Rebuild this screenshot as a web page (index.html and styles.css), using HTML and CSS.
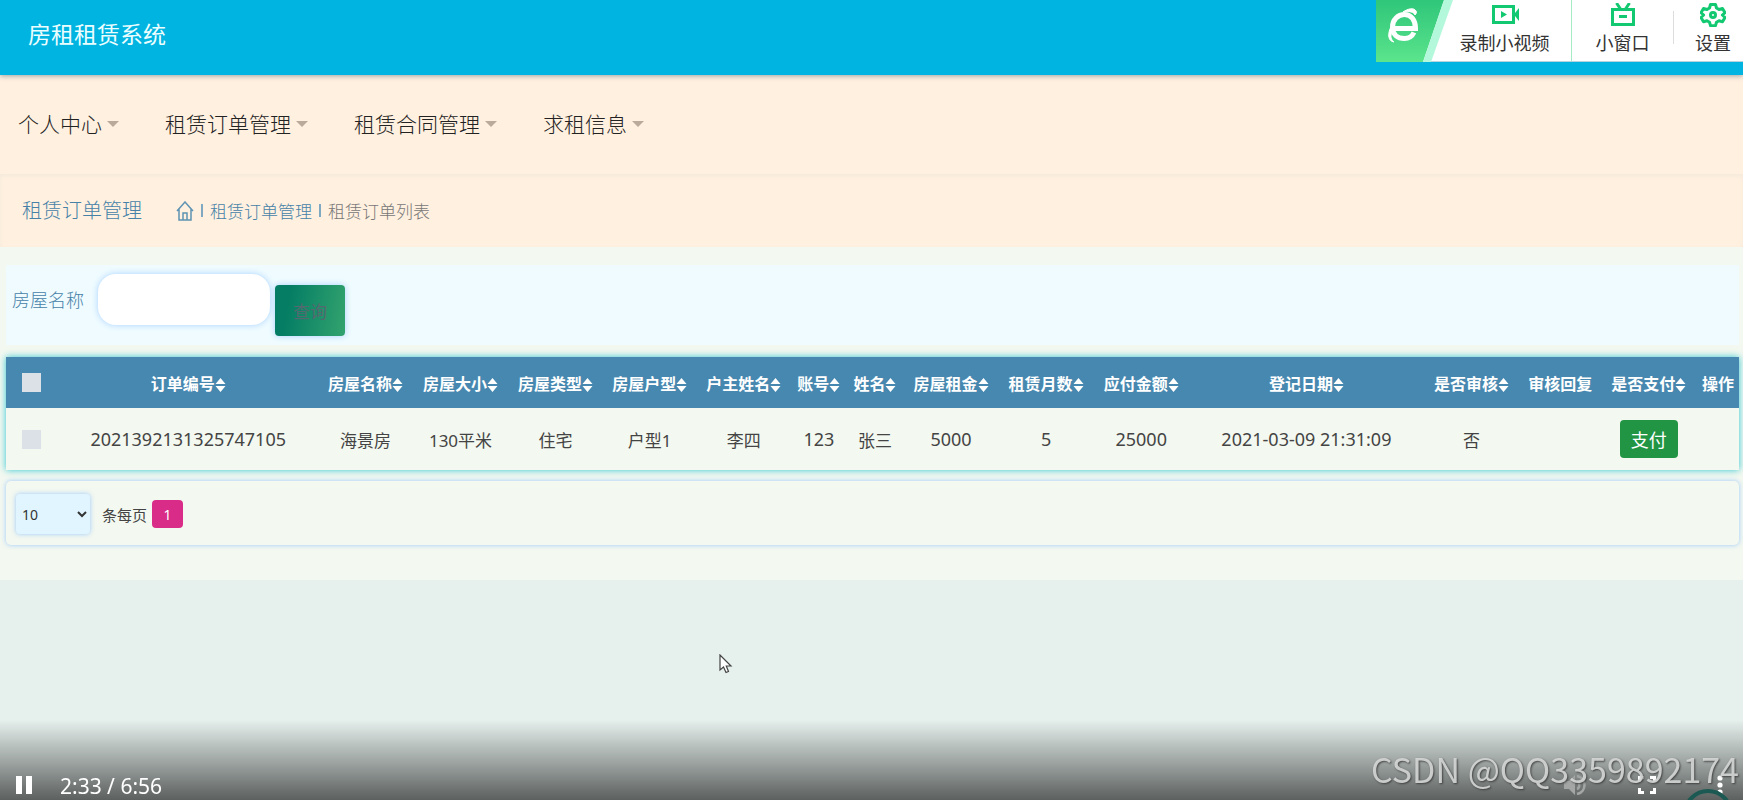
FILE: index.html
```html
<!DOCTYPE html>
<html lang="zh-CN">
<head>
<meta charset="utf-8">
<title>房租租赁系统</title>
<link rel="stylesheet" href="styles.css">
</head>
<body>
<svg class="sprite" aria-hidden="true">
  <symbol id="sort" viewBox="0 0 10 16"><path d="M5 1 10 7H0zM5 15 0 9h10z" fill="currentColor"/></symbol>
</svg>
<header class="header">
  <h1 class="brand">房租租赁系统</h1>
  <div class="recorder">
    <div class="recorder-logo">
      <svg width="82" height="62" viewBox="0 0 82 62">
        <defs><linearGradient id="g" x1="0" y1="0" x2="0" y2="1"><stop offset="0" stop-color="#2fc67a"/><stop offset="1" stop-color="#5be48c"/></linearGradient></defs>
        <path d="M0 0H68L47 62H0z" fill="url(#g)"/>
        <path d="M68 0H77L55 62H47z" fill="#b4f8dc"/>
        <path d="M17 28.500H39.500C39.500 20 35 14.500 28.500 14.500S16.500 19.500 16.500 27 21.500 38.500 28.500 38.500C33 38.500 36 36.500 38 32.500" fill="none" stroke="#fff" stroke-width="5"/>
        <path d="M27 12C31 9 38 7 40 11c1 1 0 3-1 4-1-3-5-4-12-3zM15 27c-3 5-4 14 3 15-3-2-4-6-2-10z" fill="#fff" stroke="#fff"/>
      </svg>
    </div>
    <button class="tool tool-video" type="button">
      <svg width="28" height="24" viewBox="0 0 28 24" fill="none" stroke="#12c870" stroke-width="3"><path d="M2.500 3.500h20v16h-20z"/><path d="M10 8v7l6-3.500z" fill="#12c870" stroke="none"/><path d="M24 10l4-5v13l-4-5z" fill="#12c870" stroke="none"/></svg>
      <span>录制小视频</span>
    </button>
    <button class="tool tool-window" type="button">
      <svg width="28" height="24" viewBox="0 0 28 24" fill="none" stroke="#12c870" stroke-width="3"><path d="M3.500 6.500h21v15h-21zM10 13.500h8M7.500 0l4 6M20.500 0l-4 6"/></svg>
      <span>小窗口</span>
    </button>
    <button class="tool tool-settings" type="button">
      <svg width="26" height="24" viewBox="0 0 26 24" fill="none" stroke="#12c870" stroke-width="3" stroke-linejoin="round"><path d="M10.500 1.500h5l1 3.500 2.500 1.500 3.500-1 2.500 4.200-2.600 2.300 2.600 2.500-2.500 4.200-3.500-1-2.500 1.500-1 3.500h-5l-1-3.500L7 17.700l-3.500 1L1 14.500 3.600 12 1 9.700 3.500 5.500l3.500 1L9.500 5z"/><circle cx="13" cy="12" r="2.500"/></svg>
      <span>设置</span>
    </button>
  </div>
</header>
<nav class="menu">
  <a href="#">个人中心</a>
  <a href="#">租赁订单管理</a>
  <a href="#">租赁合同管理</a>
  <a href="#">求租信息</a>
</nav>
<div class="crumbs">
  <h2>租赁订单管理</h2>
  <div class="trail">
    <a href="#" aria-label="首页"><svg width="18" height="20" viewBox="0 0 18 20" fill="none" stroke="#5f93b3" stroke-width="1.500"><path d="M1 10 9 1l8 9M3 8v11h12V8M7 19v-7h4v7"/></svg></a>
    <i></i><a href="#">租赁订单管理</a><i></i><span>租赁订单列表</span>
  </div>
</div>
<main class="main">
  <form class="search">
    <label for="house">房屋名称</label>
    <input id="house" type="text">
    <button type="button">查询</button>
  </form>
  <table class="orders">
    <colgroup><col class="w-check"><col class="w-id"><col class="w-m"><col class="w-l"><col class="w-m"><col class="w-m"><col class="w-m"><col class="w-s"><col class="w-s"><col class="w-l"><col class="w-m"><col class="w-l"><col class="w-date"><col class="w-l"><col class="w-reply"><col class="w-l"><col class="w-act"></colgroup>
    <thead><tr>
      <th class="check"><input type="checkbox" aria-label="全选"></th>
      <th>订单编号<svg><use href="#sort"/></svg></th>
      <th>房屋名称<svg><use href="#sort"/></svg></th>
      <th>房屋大小<svg><use href="#sort"/></svg></th>
      <th>房屋类型<svg><use href="#sort"/></svg></th>
      <th>房屋户型<svg><use href="#sort"/></svg></th>
      <th>户主姓名<svg><use href="#sort"/></svg></th>
      <th>账号<svg><use href="#sort"/></svg></th>
      <th>姓名<svg><use href="#sort"/></svg></th>
      <th>房屋租金<svg><use href="#sort"/></svg></th>
      <th>租赁月数<svg><use href="#sort"/></svg></th>
      <th>应付金额<svg><use href="#sort"/></svg></th>
      <th>登记日期<svg><use href="#sort"/></svg></th>
      <th>是否审核<svg><use href="#sort"/></svg></th>
      <th>审核回复</th>
      <th>是否支付<svg><use href="#sort"/></svg></th>
      <th>操作</th>
    </tr></thead>
    <tbody><tr>
      <td class="check"><input type="checkbox" aria-label="选择订单"></td>
      <td class="num">2021392131325747105</td>
      <td>海景房</td>
      <td>130平米</td>
      <td>住宅</td>
      <td>户型1</td>
      <td>李四</td>
      <td class="num">123</td>
      <td>张三</td>
      <td class="num">5000</td>
      <td class="num">5</td>
      <td class="num">25000</td>
      <td class="num">2021-03-09 21:31:09</td>
      <td>否</td>
      <td></td>
      <td><button class="pay" type="button">支付</button></td>
      <td></td>
    </tr></tbody>
  </table>
  <div class="pager">
    <select id="size"><option>10</option><option>20</option></select>
    <label for="size">条每页</label>
    <button type="button">1</button>
  </div>
</main>
<svg class="cursor" width="14" height="20" viewBox="0 0 14 20"><path d="M1 1v15l3.500-3 2.500 5.500 2.500-1L7.300 12H12z" fill="#fff" stroke="#444" stroke-width="1.200"/></svg>
<div class="player">
  <button type="button" aria-label="暂停"><svg width="16" height="18" viewBox="0 0 16 18" fill="#fff"><path d="M0 0h6v18H0zM10 0h6v18h-6z"/></svg></button>
  <span class="time">2:33 / 6:56</span>
  <svg class="ring" width="50" height="11" viewBox="0 0 50 11" fill="none" stroke="#1c5953" stroke-width="4"><circle cx="25" cy="25" r="23"/></svg>
  <div class="player-tools">
    <button type="button" aria-label="音量"><svg width="22" height="20" viewBox="0 0 22 20"><path d="M0 6h5l6-6v20l-6-6H0z" fill="#a3a6a5"/><path d="M13 6c3 1 3 7 0 8M13 1c10 2 10 16 0 18" fill="none" stroke="#a3a6a5" stroke-width="2.500"/></svg></button>
    <button type="button" aria-label="全屏"><svg width="18" height="18" viewBox="0 0 18 18" fill="none" stroke="#fff" stroke-width="3"><path d="M1.500 6V1.500H6M12 1.500h4.500V6M16.500 12v4.500H12M6 16.500H1.500V12"/></svg></button>
    <button type="button" aria-label="更多"><svg width="6" height="20" viewBox="0 0 6 20" fill="#fff"><circle cx="3" cy="3" r="2.600"/><circle cx="3" cy="10" r="2.600"/><circle cx="3" cy="17" r="2.600"/></svg></button>
  </div>
</div>
<div class="watermark">CSDN @QQ3359892174</div>
</body>
</html>
```
FILE: styles.css
```css
* { box-sizing: border-box; }
body {
  margin: 0;
  min-height: 100vh;
  position: relative;
  overflow: hidden;
  background: #e6f0ed;
  color: #444;
  font-family: "Noto Sans", "Noto Sans CJK SC", sans-serif;
  font-size: 17px;
}
h1, h2 { margin: 0; font-weight: 400; }
a { color: inherit; text-decoration: none; }
button { border: 0; padding: 0; background: none; font-family: inherit; color: inherit; }
svg { display: block; }
.sprite { display: none; }

.header {
  position: relative;
  display: flex;
  justify-content: space-between;
  align-items: flex-start;
  height: 75px;
  background: #00b4e2;
  box-shadow: 0 1px 5px rgba(60, 90, 110, .5);
}
.brand { padding: 17px 28px; font-size: 23px; line-height: 34px; color: #ecffff; }
.recorder { display: flex; height: 62px; background: #fff; border-bottom: 1px solid #b9d3de; }
.recorder-logo { width: 82px; }
.tool {
  position: relative;
  display: flex;
  flex-direction: column;
  align-items: center;
  gap: 3px;
  padding-top: 3px;
  font-size: 18px;
  line-height: 26px;
  color: #333;
}
.tool-video { width: 114px; padding-right: 20px; border-right: 1px solid #a5ecc6; }
.tool-window { width: 101px; }
.tool-settings { width: 70px; padding-right: 0; padding-left: 10px; }
.tool-settings::before {
  content: "";
  position: absolute;
  left: 0;
  top: 11px;
  height: 33px;
  border-left: 1px solid #ddd;
}

.menu {
  display: flex;
  gap: 46px;
  height: 99px;
  padding: 0 18px 2px;
  align-items: center;
  background: #fff0e0;
  font-size: 21px;
  font-weight: 300;
  color: #222;
}
.menu a { display: flex; align-items: center; gap: 5px; line-height: 32px; }
.menu a::after {
  content: "";
  border: 6px solid transparent;
  border-top-color: #b9aa9c;
  border-bottom: 0;
}
.crumbs {
  display: flex;
  gap: 34px;
  align-items: center;
  height: 73px;
  padding: 0 22px;
  background: #fff0df;
  box-shadow: inset 0 2px 4px #f3eadb;
  color: #4682a8;
}
.crumbs h2 { font-size: 20px; font-weight: 300; line-height: 30px; }
.trail { display: flex; align-items: center; font-weight: 300; }
.trail i { width: 2px; height: 13px; margin: 0 7px; background: #7fa9c2; }
.trail span { color: #777; }

.main { padding: 18px 4px 35px 6px; background: #f3f8f0; }
.search {
  display: flex;
  align-items: flex-start;
  height: 80px;
  padding: 9px 6px;
  background: #effbff;
}
.search label { font-size: 18px; font-weight: 300; line-height: 52px; color: #4682a8; }
.search input {
  width: 172px;
  height: 51px;
  margin: 0 5px 0 14px;
  padding: 0 16px;
  border: 0;
  border-radius: 18px;
  background: #fff;
  box-shadow: 0 0 6px #a9d2ff;
  font-size: 17px;
}
.search button {
  width: 70px;
  height: 51px;
  margin-top: 11px;
  border-radius: 4px;
  background: linear-gradient(100deg, #047d64 20%, #33a36e);
  box-shadow: 0 0 6px #a9d2ff;
  color: #54696f;
  font-size: 17px;
}

.orders {
  width: 100%;
  margin-top: 12px;
  table-layout: fixed;
  border-collapse: collapse;
  box-shadow: 0 0 7px #2fc5d2;
  background: #f3f8f0;
  text-align: center;
}
.w-check { width: 52px; }
.w-id { width: 260px; }
.w-s { width: 56px; }
.w-m { width: 94px; }
.w-l { width: 96px; }
.w-date { width: 234px; }
.w-reply { width: 81px; }
.w-act { width: 42px; }
.orders th, .orders td { padding: 0; white-space: nowrap; }
.orders th { height: 51px; background: #4788b0; color: #fff; font-size: 16px; }
.orders td { height: 62px; color: #444; }
.orders .num { font-size: 18px; }
.orders th svg { display: inline-block; width: 11px; height: 16px; vertical-align: -3px; }
.orders .check { padding-left: 16px; text-align: left; }
.check input { appearance: none; display: block; width: 19px; height: 19px; margin: 0; background: #dce0e7; }
.pay {
  width: 58px;
  height: 38px;
  border-radius: 4px;
  background: #229545;
  color: #fff;
  font-size: 18px;
}
.pager {
  display: flex;
  align-items: center;
  height: 64px;
  margin-top: 11px;
  padding: 2px 10px 0;
  border-radius: 5px;
  box-shadow: 0 0 5px #9cc8fa;
  background: #f3f8f0;
  font-size: 15px;
}
.pager select {
  width: 74px;
  height: 40px;
  margin-right: 12px;
  padding: 0 2px;
  border: 0;
  border-radius: 4px;
  background-color: #e0f5ff;
  box-shadow: 0 0 5px #9cc8fa;
  color: #333;
  font-family: inherit;
  font-size: 14px;
}
.pager button {
  width: 31px;
  height: 28px;
  margin-left: 5px;
  border-radius: 4px;
  background: #d82c88;
  color: #fff;
  font-size: 14px;
}

.cursor { position: absolute; left: 719px; top: 654px; }
.player {
  position: fixed;
  left: 0;
  right: 0;
  bottom: 0;
  display: flex;
  align-items: flex-end;
  justify-content: space-between;
  height: 80px;
  padding: 0 20px 0 16px;
  background: linear-gradient(rgba(0, 0, 0, 0), rgba(0, 0, 0, .6));
  color: #fff;
}
.player > button { margin-bottom: 6px; }
.time { margin: 0 auto 0 28px; font-size: 21px; line-height: 28px; }
.player-tools { display: flex; align-items: center; gap: 52px; height: 30px; }
.player-tools button:last-child { margin-left: 9px; }
.ring { position: absolute; right: 10px; bottom: 0; }
.watermark {
  position: fixed;
  right: 4px;
  bottom: 6px;
  color: rgba(215, 217, 216, .9);
  font-family: "Noto Sans CJK SC", sans-serif;
  font-size: 34px;
  font-weight: 400;
  line-height: 50px;
  text-shadow: 1px 1px 2px rgba(50, 50, 50, .8);
}
```
